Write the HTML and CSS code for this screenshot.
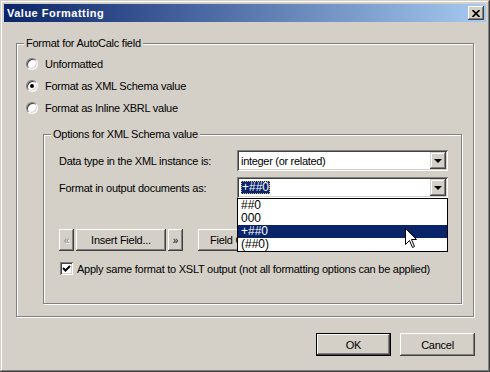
FILE: index.html
```html
<!DOCTYPE html>
<html lang="en">
<head>
    <meta charset="UTF-8">
    <title>Value Formatting</title>
    <link rel="stylesheet" href="styles.css">
</head>
<body>
    <div class="window">
        <div class="titlebar">
            <span class="title">Value Formatting</span>
            <span class="close-btn">
                <svg width="8" height="7" viewBox="0 0 8 7"><path d="M0.5,0 L7.5,7 M7.5,0 L0.5,7" stroke="#000" stroke-width="1.7"/></svg>
            </span>
        </div>

        <div class="group outer-group">
            <span class="group-title">Format for AutoCalc field</span>
            <div class="radio-list">
                <div class="radio-row"><span class="radio"></span>Unformatted</div>
                <div class="radio-row"><span class="radio checked"></span>Format as XML Schema value</div>
                <div class="radio-row"><span class="radio"></span>Format as Inline XBRL value</div>
            </div>

            <div class="group inner-group">
                <span class="group-title">Options for XML Schema value</span>

                <div class="field-row first">
                    <label class="field-label">Data type in the XML instance is:</label>
                    <div class="combo">
                        <span class="combo-text">integer (or related)</span>
                        <span class="combo-arrow"><span class="tri"></span></span>
                    </div>
                </div>

                <div class="field-row">
                    <label class="field-label">Format in output documents as:</label>
                    <div class="combo">
                        <span class="combo-text"><span class="selected-text">+##0</span></span>
                        <span class="combo-arrow"><span class="tri"></span></span>
                        <div class="dropdown">
                            <div class="option">##0</div>
                            <div class="option">000</div>
                            <div class="option active">+##0</div>
                            <div class="option">(##0)</div>
                            <svg class="cursor" width="13" height="21" viewBox="0 0 13 21">
                                <path d="M0.5,0.5 L0.5,16.5 L4.5,12.5 L7.5,19.5 L9.5,18.5 L6.5,11.5 L11.5,11.5 Z" fill="#fff" stroke="#000" stroke-width="1"/>
                            </svg>
                        </div>
                    </div>
                </div>

                <div class="button-row">
                    <span class="btn small disabled">&laquo;</span>
                    <span class="btn insert">Insert Field...</span>
                    <span class="btn small">&raquo;</span>
                    <span class="btn options">Field O</span>
                </div>

                <div class="check-row">
                    <span class="checkbox">
                        <svg width="9" height="9" viewBox="0 0 9 9"><path d="M1,4 L3.5,6.5 L8,2" fill="none" stroke="#000" stroke-width="2"/></svg>
                    </span>
                    Apply same format to XSLT output (not all formatting options can be applied)
                </div>
            </div>
        </div>

        <div class="dialog-buttons">
            <span class="btn default">OK</span>
            <span class="btn">Cancel</span>
        </div>
    </div>
</body>
</html>
```

FILE: styles.css
```css
/* Classic dialog look */
body {
    margin: 0;
    padding: 0;
    background-color: #d4d0c8;
    font-family: "Liberation Sans", Arial, sans-serif;
    font-size: 11px;
    letter-spacing: -0.25px;
    color: #000;
}

.window {
    width: 490px;
    height: 372px;
    box-sizing: border-box;
    padding: 4px;
    background: #d4d0c8;
    box-shadow: inset -1px -1px #404040, inset 1px 1px #d4d0c8,
                inset -2px -2px #808080, inset 2px 2px #fff;
}

.titlebar {
    height: 18px;
    display: flex;
    align-items: center;
    justify-content: space-between;
    padding: 0 2px 0 3px;
    background: linear-gradient(to right, #0a246a, #a6caf0);
}

.title {
    color: #fff;
    font-weight: bold;
    font-size: 11px;
    letter-spacing: 0.5px;
}

.close-btn {
    width: 16px;
    height: 14px;
    box-sizing: border-box;
    display: flex;
    align-items: center;
    justify-content: center;
    padding-right: 1px;
    background: #d4d0c8;
    box-shadow: inset -1px -1px #404040, inset 1px 1px #fff,
                inset -2px -2px #808080, inset 2px 2px #d4d0c8;
}

/* Group boxes */
.group {
    border: 1px solid #808080;
    box-shadow: inset 1px 1px #fff, 1px 1px #fff;
}

.group-title {
    display: block;
    width: fit-content;
    margin: -7px 0 0 7px;
    padding: 0 2px;
    line-height: 13px;
    background: #d4d0c8;
}

.outer-group {
    margin: 21px 12px 0 12px;
    height: 272px;
}

.radio-list {
    margin-top: 3px;
    padding-left: 9px;
}

.radio-row {
    height: 22px;
    display: flex;
    align-items: center;
}

.radio {
    width: 12px;
    height: 12px;
    box-sizing: border-box;
    margin-right: 7px;
    border-radius: 50%;
    background: #fff;
    border: 1px solid;
    border-color: #808080 #fff #fff #808080;
    box-shadow: inset 1px 1px #404040, inset -1px -1px #d4d0c8;
    display: flex;
    align-items: center;
    justify-content: center;
}

.radio.checked::after {
    content: "";
    width: 4px;
    height: 4px;
    border-radius: 50%;
    background: #000;
}

.inner-group {
    margin: 15px 11px 0 26px;
    height: 168px;
}

/* Form rows */
.field-row {
    display: flex;
    align-items: center;
    padding-left: 15px;
    margin-top: 6px;
}

.field-row.first {
    margin-top: 9px;
}

.field-label {
    width: 178px;
}

.combo {
    position: relative;
    width: 211px;
    height: 21px;
    box-sizing: border-box;
    padding: 2px;
    display: flex;
    align-items: center;
    background: #fff;
    box-shadow: inset 1px 1px #808080, inset -1px -1px #fff,
                inset 2px 2px #404040, inset -2px -2px #d4d0c8;
}

.combo-text {
    flex: 1;
    padding-left: 2px;
    letter-spacing: -0.3px;
}

.selected-text {
    display: inline-block;
    padding: 0 1px;
    line-height: 13px;
    font-size: 12px;
    letter-spacing: 0;
    color: #fff;
    background: #0a246a;
    outline: 1px dotted #c8c08a;
    outline-offset: -1px;
}

.combo-arrow {
    width: 16px;
    height: 17px;
    box-sizing: border-box;
    display: flex;
    align-items: center;
    justify-content: center;
    background: #d4d0c8;
    box-shadow: inset -1px -1px #404040, inset 1px 1px #d4d0c8,
                inset -2px -2px #808080, inset 2px 2px #fff;
}

.tri {
    width: 0;
    height: 0;
    border-left: 4px solid transparent;
    border-right: 4px solid transparent;
    border-top: 4px solid #000;
    margin-top: 1px;
}

.dropdown {
    position: absolute;
    top: 100%;
    left: 0;
    width: 211px;
    box-sizing: border-box;
    border: 1px solid #000;
    background: #fff;
    z-index: 2;
}

.option {
    height: 13px;
    line-height: 13px;
    padding-left: 3px;
    font-size: 12px;
    letter-spacing: 0;
}

.option.active {
    background: #0a246a;
    color: #fff;
}

.cursor {
    position: absolute;
    left: 167px;
    top: 29px;
}

/* Buttons */
.btn {
    height: 22px;
    box-sizing: border-box;
    display: inline-flex;
    align-items: center;
    justify-content: center;
    background: #d4d0c8;
    box-shadow: inset -1px -1px #404040, inset 1px 1px #fff,
                inset -2px -2px #808080, inset 2px 2px #d4d0c8;
}

.button-row {
    display: flex;
    padding-left: 15px;
    margin-top: 31px;
}

.btn.small {
    width: 15px;
    font-size: 10px;
}

.btn.disabled {
    color: #808080;
    text-shadow: 1px 1px #fff;
}

.btn.insert {
    width: 90px;
    margin: 0 2px;
}

.btn.options {
    width: 90px;
    margin-left: 15px;
    justify-content: flex-start;
    padding-left: 12px;
}

.check-row {
    display: flex;
    align-items: center;
    padding-left: 16px;
    margin-top: 11px;
    height: 13px;
}

.checkbox {
    width: 13px;
    height: 13px;
    box-sizing: border-box;
    margin-right: 4px;
    display: flex;
    align-items: center;
    justify-content: center;
    background: #fff;
    box-shadow: inset 1px 1px #808080, inset -1px -1px #fff,
                inset 2px 2px #404040, inset -2px -2px #d4d0c8;
}

.dialog-buttons {
    display: flex;
    justify-content: flex-end;
    gap: 9px;
    margin: 16px 11px 0 0;
}

.dialog-buttons .btn {
    width: 75px;
    height: 23px;
}

.btn.default {
    border: 1px solid #000;
}
```
